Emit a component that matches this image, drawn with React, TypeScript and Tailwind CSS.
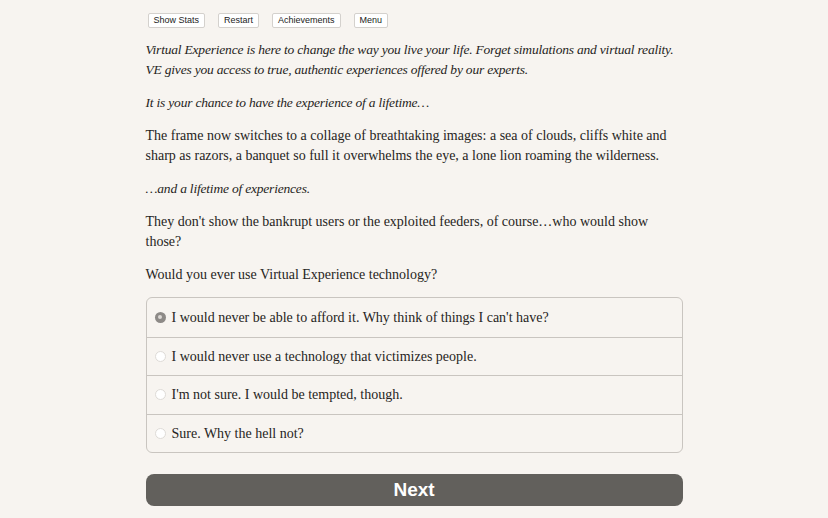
import { useState } from "react";

const options = [
  "I would never be able to afford it. Why think of things I can't have?",
  "I would never use a technology that victimizes people.",
  "I'm not sure. I would be tempted, though.",
  "Sure. Why the hell not?",
];

const topButtons = ["Show Stats", "Restart", "Achievements", "Menu"];

export default function App() {
  const [selected, setSelected] = useState(0);

  return (
    <div className="min-h-screen bg-[#f7f4f0] text-[#262422] font-['Liberation_Serif','Times_New_Roman',serif]">
      <div className="mx-auto w-[537px] pt-[13px]">
        {/* Header buttons */}
        <div className="flex gap-[13px] pl-[2px]">
          {topButtons.map((label) => (
            <button
              key={label}
              className="h-[15px] rounded-[2px] border border-[#d4d1cd] bg-white px-[5px] font-['Liberation_Sans',Arial,sans-serif] text-[9px] leading-[13px] text-[#222]"
            >
              {label}
            </button>
          ))}
        </div>

        {/* Story text */}
        <div className="mt-[12px] space-y-[13px] text-[14px] leading-[20px]">
          <p className="text-[13.5px] italic tracking-[-0.2px]">
            Virtual Experience is here to change the way you live your life. Forget simulations and virtual reality.
            <br />
            VE gives you access to true, authentic experiences offered by our experts.
          </p>
          <p className="text-[13.5px] italic tracking-[-0.2px]">It is your chance to have the experience of a lifetime…</p>
          <p>
            The frame now switches to a collage of breathtaking images: a sea of clouds, cliffs white and sharp as razors, a banquet so full it overwhelms the eye, a lone lion roaming the wilderness.
          </p>
          <p className="text-[13.5px] italic tracking-[-0.2px]">…and a lifetime of experiences.</p>
          <p>
            They don't show the bankrupt users or the exploited feeders, of course…who would show those?
          </p>
          <p>Would you ever use Virtual Experience technology?</p>
        </div>

        {/* Choices */}
        <div className="mt-[12px] overflow-hidden rounded-[6px] border border-[#c9c5c0]">
          {options.map((opt, i) => (
            <label
              key={opt}
              onClick={() => setSelected(i)}
              className="flex h-[38.5px] cursor-pointer items-center gap-[6px] border-t border-[#c9c5c0] pl-[8px] text-[14px] first:border-t-0"
            >
              {selected === i ? (
                <span className="flex h-[11px] w-[11px] items-center justify-center rounded-full bg-[#8d8a87]">
                  <span className="h-[4px] w-[4px] rounded-full bg-[#dcd9d5]" />
                </span>
              ) : (
                <span className="h-[11px] w-[11px] rounded-full border border-[#dedbd7] bg-white" />
              )}
              <span>{opt}</span>
            </label>
          ))}
        </div>

        {/* Next */}
        <button className="mt-[21px] flex h-[32px] w-full items-center justify-center rounded-[8px] bg-[#62605c] font-['Liberation_Sans',Arial,sans-serif] text-[19px] font-bold text-white">
          Next
        </button>
      </div>
    </div>
  );
}
